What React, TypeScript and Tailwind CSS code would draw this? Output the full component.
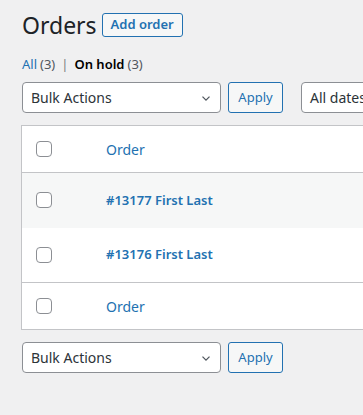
import React from 'react';

type Row = {
  id: string;
  label: string;
  alt?: boolean;
};

const rows: Row[] = [
  { id: '13177', label: '#13177 First Last', alt: true },
  { id: '13176', label: '#13176 First Last' },
];

function Checkbox() {
  return <span className="block h-4 w-4 rounded-[4px] border border-[#8c8f94] bg-white" />;
}

function BulkActions({ withDates = false }: { withDates?: boolean }) {
  return (
    <div className="flex items-center">
      <div className="flex h-[31px] w-[199px] items-center justify-between rounded-[4px] border border-[#8c8f94] bg-white pl-[8px] pr-[7px] text-[14px] text-[#2c3338]">
        <span>Bulk Actions</span>
        <svg width="14" height="14" viewBox="0 0 20 20" fill="none" stroke="#50575e" strokeWidth="1.8">
          <path d="M5 8l5 5 5-5" />
        </svg>
      </div>
      <button className="ml-[7px] flex h-[31px] w-[55px] items-center justify-center rounded-[3px] border border-[#2271b1] bg-[#f6f7f7] text-[13px] text-[#2271b1]">
        Apply
      </button>
      {withDates && (
        <div className="ml-[18px] flex h-[31px] w-[150px] shrink-0 items-center rounded-[4px] border border-[#8c8f94] bg-white pl-[8px] text-[14px] text-[#2c3338]">
          All dates
        </div>
      )}
    </div>
  );
}

export default function App() {
  return (
    <div
      className="h-[415px] w-[363px] overflow-hidden bg-[#f0f0f1] pl-[22px] pt-[10px]"
      style={{ fontFamily: '"Noto Sans", "Open Sans", sans-serif' }}
    >
      <div className="flex items-center">
        <h1 className="text-[23px] leading-[30px] text-[#1d2327]">Orders</h1>
        <button className="ml-[5px] flex h-[24px] w-[81px] items-center justify-center rounded-[3px] border border-[#2271b1] bg-[#f6f7f7] text-[13px] font-semibold text-[#2271b1]">
          Add order
        </button>
      </div>

      <div className="mt-[14px] flex items-center text-[13px] leading-[20px] text-[#50575e]">
        <span className="text-[#2271b1]">All</span>
        <span className="ml-[3px]">(3)</span>
        <span className="mx-[6px] text-[#787c82]">|</span>
        <span className="font-semibold text-black">On hold</span>
        <span className="ml-[3px]">(3)</span>
      </div>

      <div className="mt-[8px] w-[500px]">
        <BulkActions withDates />
      </div>

      <div className="-ml-[1px] mt-[12px] w-[420px] border border-[#c3c4c7] bg-white text-[13px]">
        <div className="flex h-[47px] items-center border-b border-[#c3c4c7]">
          <div className="w-[84px] pl-[14px]">
            <Checkbox />
          </div>
          <span className="text-[14px] text-[#2271b1]">Order</span>
        </div>
        {rows.map((row) => (
          <div
            key={row.id}
            className={`flex h-[54.5px] items-center ${row.alt ? 'bg-[#f6f7f7]' : 'bg-white'}`}
          >
            <div className="w-[84px] pl-[14px]">
              <Checkbox />
            </div>
            <span className="font-semibold text-[#2271b1]">{row.label}</span>
          </div>
        ))}
        <div className="flex h-[47px] items-center border-t border-[#c3c4c7]">
          <div className="w-[84px] pl-[14px]">
            <Checkbox />
          </div>
          <span className="text-[14px] text-[#2271b1]">Order</span>
        </div>
      </div>

      <div className="mt-[12px]">
        <BulkActions />
      </div>
    </div>
  );
}
